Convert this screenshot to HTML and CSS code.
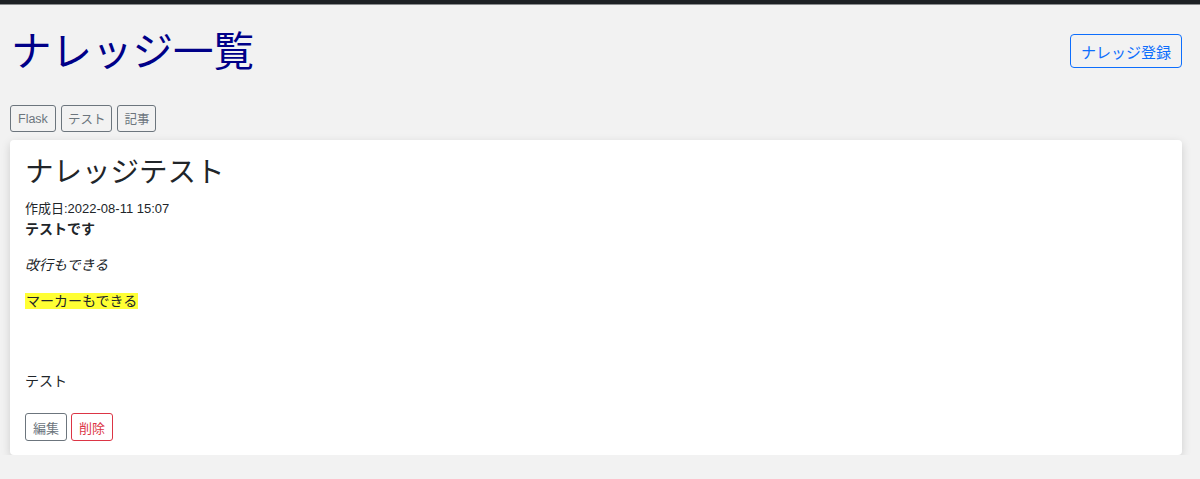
FILE: index.html
```html
<!DOCTYPE html>
<html lang="ja">
<head>
<meta charset="utf-8">
<title>ナレッジ一覧</title>
<link rel="stylesheet" href="styles.css">
</head>
<body>
<div class="topbar"></div>
<div class="page">
  <header class="header">
    <h1 class="page-title">ナレッジ一覧</h1>
    <button class="btn btn-primary-outline">ナレッジ登録</button>
  </header>
  <div class="tags">
    <button class="btn btn-sm btn-secondary-outline">Flask</button>
    <button class="btn btn-sm btn-secondary-outline">テスト</button>
    <button class="btn btn-sm btn-secondary-outline">記事</button>
  </div>
  <article class="card">
    <h2 class="card-title">ナレッジテスト</h2>
    <div class="date">作成日:2022-08-11 15:07</div>
    <div class="content">
      <p class="first"><strong>テストです</strong></p>
      <p><em>改行もできる</em></p>
      <p><mark>マーカーもできる</mark></p>
      <p class="spacer"><br></p>
      <p>テスト</p>
    </div>
    <div class="actions">
      <button class="btn btn-sm btn-secondary-outline">編集</button>
      <button class="btn btn-sm btn-danger-outline">削除</button>
    </div>
  </article>
</div>
</body>
</html>
```

FILE: styles.css
```css
* { box-sizing: border-box; }
body {
  margin: 0;
  background: #f2f2f2;
  font-family: "Liberation Sans", "Noto Sans CJK JP", sans-serif;
  color: #212529;
}
.topbar {
  height: 5px;
  background: #1e2125;
  border-bottom: 1px solid #8a8c8e;
}
.page {
  padding: 0 18px 0 10px;
}
.header {
  display: flex;
  justify-content: space-between;
  align-items: center;
  padding-top: 23px;
}
.page-title {
  margin: 0 0 0 1px;
  font-size: 40.5px;
  font-weight: 400;
  line-height: 48px;
  color: #000088;
}
.btn {
  font-family: "Liberation Sans", "Noto Sans CJK JP", sans-serif;
  background: transparent;
  border: 1px solid;
  border-radius: 4px;
  cursor: pointer;
}
.btn-primary-outline {
  font-size: 15px;
  color: #0d6efd;
  border-color: #0d6efd;
  padding: 0 10px;
  height: 34px;
  margin-top: -2px;
}
.btn-sm {
  font-size: 12.5px;
  padding: 0 7px;
  height: 27px;
  border-radius: 3px;
}
.tags .btn-sm {
  padding: 0 6px;
}
.tags .btn-sm:first-child {
  padding: 0 7px;
}
.btn-secondary-outline {
  color: #6c757d;
  border-color: #6c757d;
}
.btn-danger-outline {
  color: #dc3545;
  border-color: #dc3545;
}
.tags {
  display: flex;
  gap: 5px;
  margin-top: 29px;
}
.card {
  margin-top: 8px;
  background: #fff;
  border-radius: 4px;
  box-shadow: 0 3px 10px rgba(0, 0, 0, 0.15);
  padding: 14px 15px 14px 15px;
}
.card-title {
  margin: 0;
  font-size: 28.5px;
  font-weight: 400;
  line-height: 36px;
}
.date {
  margin-top: 10px;
  font-size: 13px;
  line-height: 18px;
}
.content {
  font-size: 14px;
  line-height: 20px;
}
.content p {
  margin: 16px 0 0;
}
.content p.first {
  margin-top: 1px;
}
.content p.spacer {
  margin-top: 24px;
}
mark {
  background: #ffff33;
  color: #212529;
  padding: 0 1px;
}
.actions {
  display: flex;
  gap: 4px;
  margin-top: 22px;
}
.actions .btn-sm {
  height: 28px;
  font-size: 13px;
}
```
